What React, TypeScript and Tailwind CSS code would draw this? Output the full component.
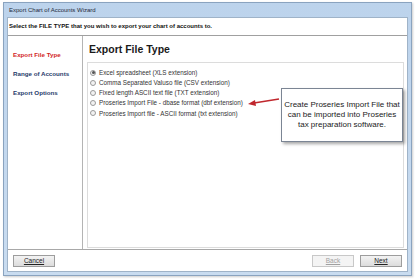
import React from "react";

const options = [
  "Excel spreadsheet (XLS extension)",
  "Comma Separated Valuso file (CSV extension)",
  "Fixed length ASCII text file (TXT extension)",
  "Proseries Import File - dbase format (dbf extension)",
  "Proseries Import file - ASCII format (txt extension)",
];

const Radio = ({ checked }: { checked?: boolean }) => (
  <span className="w-[6px] h-[6px] rounded-full border border-[#9a9a9a] bg-[#f2f2f2] flex items-center justify-center shrink-0">
    {checked && <span className="w-[3px] h-[3px] rounded-full bg-[#555]" />}
  </span>
);

const Btn = ({ label, disabled }: { label: string; disabled?: boolean }) => (
  <div
    className={
      "w-[42px] h-[12px] border flex items-center justify-center text-[6.5px] leading-[7px] underline " +
      (disabled
        ? "border-[#c8c8c8] bg-[#f4f4f4] text-[#a0a0a0]"
        : "border-[#9d9d9d] bg-gradient-to-b from-[#f3f3f3] to-[#dcdcdc] text-[#222]")
    }
  >
    {label}
  </div>
);

export default function App() {
  return (
    <div
      className="w-[418px] h-[280px] bg-white pt-[2px] pl-[3px]"
      style={{ fontFamily: '"Liberation Sans", Arial, sans-serif' }}
    >
      <div className="w-[409px] h-[274px] border border-[#8aa3bf] bg-gradient-to-b from-[#bcd3ec] to-[#c9dcf0] flex flex-col px-[3px] pb-[3px] shadow-[1px_1px_2px_rgba(0,0,0,0.2)]">
        <div className="h-[14px] flex items-center pl-[2px] text-[6px] leading-[7px] text-[#1e2a3a]">
          Export Chart of Accounts Wizard
        </div>
        <div className="flex-1 bg-white border border-[#9fb3c8] flex flex-col">
          <div className="h-[18px] border-b border-[#a0a0a0] flex items-center pl-[1px] text-[6px] leading-[7px] font-bold text-[#111]">
            Select the FILE TYPE that you wish to export your chart of accounts to.
          </div>
          <div className="flex-1 flex">
            <div className="w-[75px] border-r border-[#b4b4b4] pt-[15px] pl-[5px] flex flex-col gap-[12px] text-[6.2px] leading-[7px] font-bold">
              <div className="text-[#d21f1f]">Export File Type</div>
              <div className="text-[#1f3b6a]">Range of Accounts</div>
              <div className="text-[#1f3b6a]">Export Options</div>
            </div>
            <div className="flex-1 flex flex-col pl-[4px] pr-[3px]">
              <div className="h-[26px] flex items-center pl-[2px] text-[10.5px] leading-[12px] font-bold text-[#1a1a1a]">
                Export File Type
              </div>
              <div className="flex-1 border border-[#dcdcdc] mb-[1px] relative pt-[6px] pl-[2px] flex flex-col gap-[3.2px]">
                {options.map((o, i) => (
                  <div key={o} className="flex items-center gap-[3px] text-[6.3px] text-[#333] h-[7px]">
                    <Radio checked={i === 0} />
                    <span>{o}</span>
                  </div>
                ))}
                <svg className="absolute left-[160px] top-[34px]" width="32" height="10" viewBox="0 0 32 10">
                  <line x1="31" y1="2" x2="6" y2="6" stroke="#c0272d" strokeWidth="1.4" />
                  <polygon points="0,7 7,3 8,9" fill="#c0272d" />
                </svg>
                <div className="absolute left-[193px] top-[25px] w-[122px] h-[54px] bg-white border border-[#7b8594] shadow-[2px_2px_3px_rgba(0,0,0,0.35)] flex items-center justify-center text-center text-[8px] leading-[10px] text-[#222] px-[1px]">
                  Create Proseries Import File that can be imported into Proseries tax preparation software.
                </div>
              </div>
            </div>
          </div>
          <div className="h-[22px] border-t border-[#a8a8a8] flex items-center px-[5px]">
            <Btn label="Cancel" />
            <div className="flex-1" />
            <div className="flex gap-[6px]">
              <Btn label="Back" disabled />
              <Btn label="Next" />
            </div>
          </div>
        </div>
      </div>
    </div>
  );
}
